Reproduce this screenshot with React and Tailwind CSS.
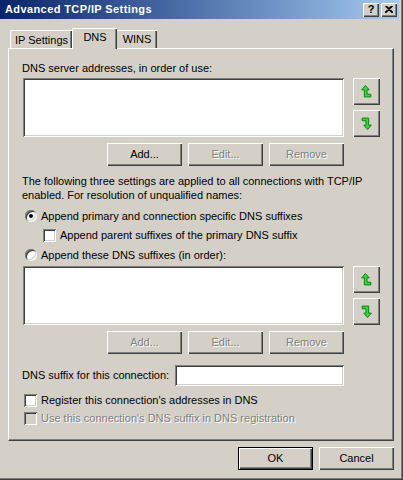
import React from "react";

const RAISED = "bg-[#d4d0c8] shadow-[inset_1px_1px_#ffffff,inset_-1px_-1px_#404040,inset_-2px_-2px_#808080]";
const SUNKEN = "shadow-[inset_1px_1px_#808080,inset_-1px_-1px_#ffffff,inset_2px_2px_#404040,inset_-2px_-2px_#d4d0c8]";

function Btn({ children, disabled, def }) {
  if (def) {
    return (
      <div className="w-[75px] h-[23px] border border-black flex">
        <div className={`flex-1 flex items-center justify-center ${RAISED}`}>{children}</div>
      </div>
    );
  }
  return (
    <div
      className={`w-[75px] h-[23px] flex items-center justify-center ${RAISED} ${
        disabled ? "text-[#808080] [text-shadow:1px_1px_0_#ffffff]" : ""
      }`}
    >
      {children}
    </div>
  );
}

function Arrow({ down }) {
  return (
    <svg width="11" height="13" viewBox="0 0 10 12">
      <polygon
        points="4,0.5 7.5,4.5 5.5,4.5 5.5,8.5 9,8.5 9,11 3,11 3,4.5 0.5,4.5"
        fill="#3fd23f"
        stroke="#00860b"
        strokeWidth="0.9"
        strokeLinejoin="miter"
        transform={down ? "rotate(180 5 6)" : undefined}
      />
    </svg>
  );
}

function IconBtn({ down }) {
  return (
    <div className={`w-[27px] h-[27px] flex items-center justify-center ${RAISED}`}>
      <Arrow down={down} />
    </div>
  );
}

function ListRow() {
  return (
    <div className="flex mt-[3px] h-[59px]">
      <div className={`ml-[1px] w-[321px] h-[59px] bg-white ${SUNKEN}`} />
      <div className="ml-[9px] flex flex-col gap-[5px]">
        <IconBtn />
        <IconBtn down />
      </div>
    </div>
  );
}

function Radio({ checked }) {
  return (
    <div className={`w-[12px] h-[12px] rounded-full bg-white flex items-center justify-center ${SUNKEN}`}>
      {checked && <div className="w-[4px] h-[4px] rounded-full bg-black" />}
    </div>
  );
}

function Check({ disabled }) {
  return (
    <div className={`w-[13px] h-[13px] ${disabled ? "bg-[#d4d0c8]" : "bg-white"} ${SUNKEN}`} />
  );
}

export default function App() {
  return (
    <div className="w-[403px] h-[480px] bg-[#d4d0c8] border-r border-b border-[#404040] overflow-hidden font-['Liberation_Sans',Arial,sans-serif] text-[11px] leading-[13px] text-black">
      <div className="h-full border-r border-b border-[#808080] pr-[2px] pb-[2px] flex flex-col">
        {/* Title bar */}
        <div className="h-[19px] flex items-center justify-between pl-[5px] pr-[2px] bg-gradient-to-r from-[#0a246a] to-[#a6caf0]">
          <span className="font-bold text-white tracking-[0.4px]">Advanced TCP/IP Settings</span>
          <div className="flex gap-[2px]">
            <div className={`w-[16px] h-[14px] flex items-center justify-center font-bold text-[11px] leading-[11px] ${RAISED}`}>
              ?
            </div>
            <div className={`w-[16px] h-[14px] flex items-center justify-center ${RAISED}`}>
              <svg width="8" height="7" viewBox="0 0 8 7">
                <path d="M0.5 0 L7.5 7 M1.5 0 L8 6.5 M7.5 0 L0.5 7 M6.5 0 L0 6.5" stroke="#000" strokeWidth="1.2" />
              </svg>
            </div>
          </div>
        </div>

        {/* Body */}
        <div className="pl-[8px] pt-[9px] flex flex-col">
          {/* Tabs */}
          <div className="h-[21px] flex items-end pl-[2px] -mb-[1px] relative z-10">
            <div className="w-[62px] h-[18px] mb-[1px] border-t border-l border-white shadow-[inset_-1px_0_#404040,inset_-2px_0_#808080] rounded-tl-[2px] flex items-center justify-center pt-[1px]">
              IP Settings
            </div>
            <div className="w-[45px] h-[21px] bg-[#d4d0c8] border-t border-l border-white shadow-[inset_-1px_0_#404040,inset_-2px_0_#808080] rounded-tl-[2px] flex items-center justify-center pb-[3px]">
              DNS
            </div>
            <div className="w-[40px] h-[18px] mb-[1px] shadow-[inset_0_1px_#ffffff,inset_-1px_0_#404040,inset_-2px_0_#808080] flex items-center justify-center pt-[1px]">
              WINS
            </div>
          </div>

          {/* Panel */}
          <div className="w-[386px] h-[393px] border-t border-l border-white border-r border-b border-r-[#404040] border-b-[#404040] shadow-[inset_-1px_-1px_#808080] pl-[13px] flex flex-col">
            <div className="mt-[13px] h-[13px] whitespace-nowrap">DNS server addresses, in order of use:</div>
            <ListRow />
            <div className="mt-[6px] w-[322px] flex justify-end gap-[6px]">
              <Btn>Add...</Btn>
              <Btn disabled>Edit...</Btn>
              <Btn disabled>Remove</Btn>
            </div>

            <div className="mt-[8px] leading-[14px] whitespace-nowrap">
              The following three settings are applied to all connections with TCP/IP
              <br />
              enabled. For resolution of unqualified names:
            </div>

            <div className="mt-[7px] h-[14px] flex items-center gap-[4px] pl-[3px]">
              <Radio checked />
              <span>Append primary and connection specific DNS suffixes</span>
            </div>
            <div className="mt-[5px] h-[14px] flex items-center gap-[4px] pl-[21px]">
              <Check />
              <span>Append parent suffixes of the primary DNS suffix</span>
            </div>
            <div className="mt-[6px] h-[14px] flex items-center gap-[4px] pl-[3px]">
              <Radio />
              <span>Append these DNS suffixes (in order):</span>
            </div>

            <div className="mt-[1px]">
              <ListRow />
            </div>
            <div className="mt-[6px] w-[322px] flex justify-end gap-[6px]">
              <Btn disabled>Add...</Btn>
              <Btn disabled>Edit...</Btn>
              <Btn disabled>Remove</Btn>
            </div>

            <div className="mt-[11px] h-[21px] flex items-center">
              <span className="w-[153px] whitespace-nowrap">DNS suffix for this connection:</span>
              <div className={`w-[169px] h-[21px] bg-white ${SUNKEN}`} />
            </div>

            <div className="mt-[7px] h-[14px] flex items-center gap-[4px] pl-[2px]">
              <Check />
              <span>Register this connection's addresses in DNS</span>
            </div>
            <div className="mt-[4px] h-[14px] flex items-center gap-[4px] pl-[2px]">
              <Check disabled />
              <span className="text-[#808080] [text-shadow:1px_1px_0_#ffffff]">
                Use this connection's DNS suffix in DNS registration
              </span>
            </div>
          </div>

          {/* Bottom buttons */}
          <div className="mt-[6px] w-[386px] flex justify-end gap-[6px]">
            <Btn def>OK</Btn>
            <Btn>Cancel</Btn>
          </div>
        </div>
      </div>
    </div>
  );
}
